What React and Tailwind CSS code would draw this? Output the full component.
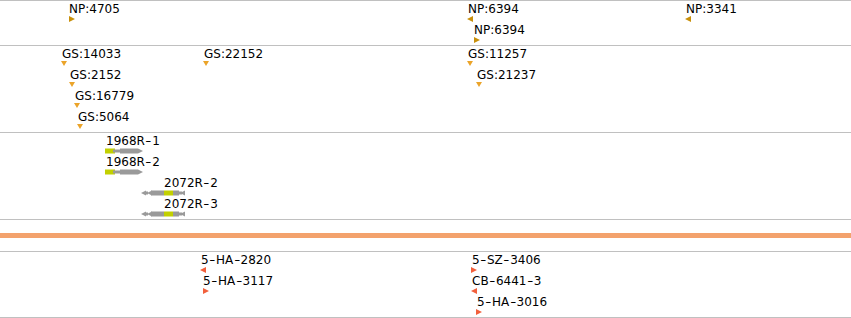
import React from "react";

const NP = "#c8900c";
const GS = "#eba42a";
const RD = "#f2603c";

function Marker({ dir, color }) {
  if (dir === "down")
    return (
      <svg width="6" height="5" viewBox="0 0 6 5" className="block">
        <polygon points="0,0 6,0 3,5" fill={color} />
      </svg>
    );
  if (dir === "left")
    return (
      <svg width="6" height="6" viewBox="0 0 6 6" className="block">
        <polygon points="6,0 0,3 6,6" fill={color} />
      </svg>
    );
  return (
    <svg width="6" height="6" viewBox="0 0 6 6" className="block">
      <polygon points="0,0 6,3 0,6" fill={color} />
    </svg>
  );
}

function GeneFwd() {
  return (
    <svg width="40" height="6" viewBox="0 0 40 6" className="block">
      <rect x="0" y="0.5" width="10" height="5" fill="#c2d000" />
      <rect x="8" y="1.5" width="2" height="3" fill="#9a9a9a" />
      <rect x="10" y="1.5" width="6" height="3" fill="#9a9a9a" />
      <rect x="15" y="0.5" width="18" height="5" fill="#9a9a9a" />
      <polygon points="33,0.5 38,3 33,5.5" fill="#9a9a9a" />
    </svg>
  );
}

function GeneRev() {
  return (
    <svg width="46" height="6" viewBox="0 0 46 6" className="block">
      <polygon points="1,3 6,0.5 6,5.5" fill="#9a9a9a" />
      <rect x="5" y="1.5" width="3" height="3" fill="#9a9a9a" />
      <polygon points="7,3 12,0.5 12,5.5" fill="#9a9a9a" />
      <rect x="11" y="0.5" width="13" height="5" fill="#9a9a9a" />
      <rect x="24" y="0.5" width="9" height="5" fill="#c2d000" />
      <rect x="33" y="0.5" width="6" height="5" fill="#9a9a9a" />
      <rect x="39" y="1.5" width="3" height="3" fill="#9a9a9a" />
      <polygon points="40,3 45,0.5 45,5.5" fill="#9a9a9a" />
    </svg>
  );
}

function Label({ text }) {
  const parts = text.split("-");
  return (
    <>
      {parts.map((p, i) => (
        <React.Fragment key={i}>
          {i > 0 && (
            <span className="inline-block mx-[1.5px] scale-x-[1.4]">-</span>
          )}
          {p}
        </React.Fragment>
      ))}
    </>
  );
}

function Feature({ x, row, label, mx, children }) {
  const left = Math.min(x, mx);
  return (
    <div className="absolute" style={{ left: left, top: 1 + 21 * row }}>
      <div
        className="text-[12px] leading-[14px] text-black whitespace-nowrap"
        style={{ marginLeft: x - left }}
      >
        <Label text={label} />
      </div>
      <div className="absolute top-[14px]" style={{ left: mx - left }}>
        {children}
      </div>
    </div>
  );
}

const track1 = [
  { x: 69, row: 0, label: "NP:4705", mx: 69, dir: "right" },
  { x: 468, row: 0, label: "NP:6394", mx: 467, dir: "left" },
  { x: 474, row: 1, label: "NP:6394", mx: 474, dir: "right" },
  { x: 686, row: 0, label: "NP:3341", mx: 685, dir: "left" },
];

const track2 = [
  { x: 62, row: 0, label: "GS:14033", mx: 61 },
  { x: 204, row: 0, label: "GS:22152", mx: 203 },
  { x: 70, row: 1, label: "GS:2152", mx: 69 },
  { x: 75, row: 2, label: "GS:16779", mx: 74 },
  { x: 78, row: 3, label: "GS:5064", mx: 77 },
  { x: 468, row: 0, label: "GS:11257", mx: 467 },
  { x: 477, row: 1, label: "GS:21237", mx: 476 },
];

const track3 = [
  { x: 106, row: 0, label: "1968R-1", mx: 105, fwd: true },
  { x: 106, row: 1, label: "1968R-2", mx: 105, fwd: true },
  { x: 164, row: 2, label: "2072R-2", mx: 140, fwd: false },
  { x: 164, row: 3, label: "2072R-3", mx: 140, fwd: false },
];

const track4 = [
  { x: 201, row: 0, label: "5-HA-2820", mx: 200, dir: "left" },
  { x: 203, row: 1, label: "5-HA-3117", mx: 203, dir: "right" },
  { x: 472, row: 0, label: "5-SZ-3406", mx: 471, dir: "right" },
  { x: 472, row: 1, label: "CB-6441-3", mx: 471, dir: "left" },
  { x: 477, row: 2, label: "5-HA-3016", mx: 476, dir: "right" },
];

export default function App() {
  return (
    <div
      className="w-[851px] h-[318px] bg-white overflow-hidden flex flex-col"
      style={{ fontFamily: '"DejaVu Sans", sans-serif' }}
    >
      <div className="relative h-[46px] shrink-0 border-t border-b border-[#c0c0c0]">
        {track1.map((f, i) => (
          <Feature key={i} {...f}>
            <Marker dir={f.dir} color={NP} />
          </Feature>
        ))}
      </div>
      <div className="relative h-[87px] shrink-0 border-b border-[#c0c0c0]">
        {track2.map((f, i) => (
          <Feature key={i} {...f}>
            <Marker dir="down" color={GS} />
          </Feature>
        ))}
      </div>
      <div className="relative h-[87px] shrink-0 border-b border-[#c0c0c0]">
        {track3.map((f, i) => (
          <Feature key={i} {...f}>
            {f.fwd ? <GeneFwd /> : <GeneRev />}
          </Feature>
        ))}
      </div>
      <div className="h-[32px] shrink-0 flex flex-col justify-center border-b border-[#c0c0c0]">
        <div className="h-[5px] bg-[#f3a26d]" />
      </div>
      <div className="relative h-[66px] shrink-0 border-b border-[#c0c0c0]">
        {track4.map((f, i) => (
          <Feature key={i} {...f}>
            <Marker dir={f.dir} color={RD} />
          </Feature>
        ))}
      </div>
    </div>
  );
}
